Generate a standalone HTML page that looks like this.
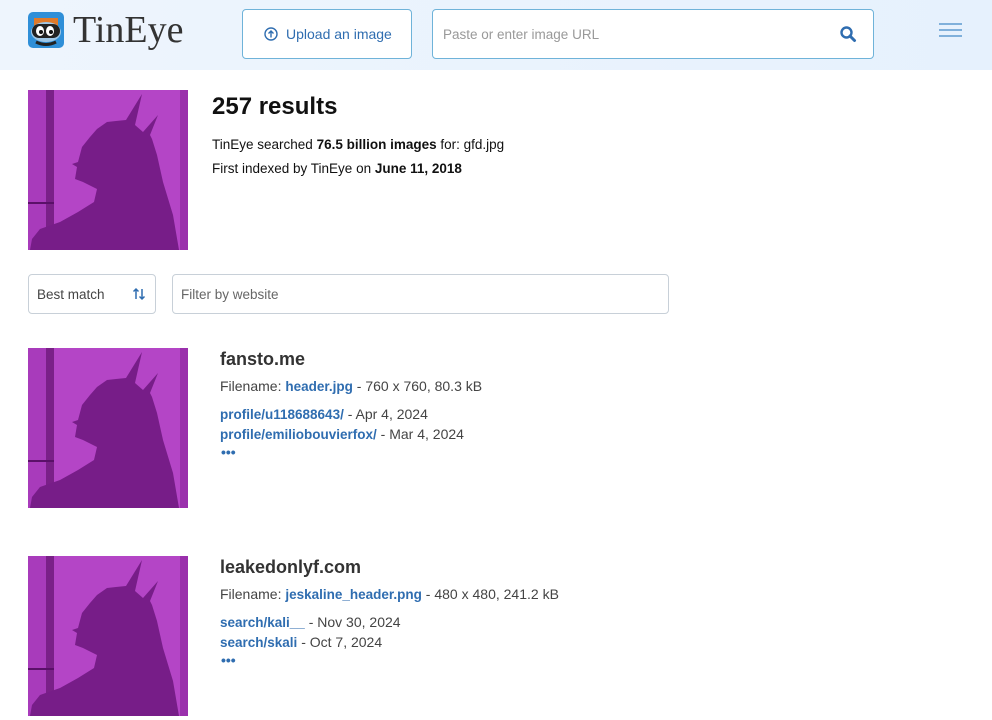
<!DOCTYPE html>
<html><head><meta charset="utf-8"><style>
*{box-sizing:border-box;margin:0;padding:0}
body{width:992px;height:720px;overflow:hidden;background:#fff;font-family:"Liberation Sans",Arial,sans-serif;color:#222;position:relative}
.abs{position:absolute;white-space:nowrap}
.hdr{position:absolute;left:0;top:0;width:992px;height:70px;background:linear-gradient(90deg,#eef5fd,#e6f1fd)}
.box{position:absolute;background:#fff;border:1px solid #6fb3d9;border-radius:4px}
a{color:#2f6db0;text-decoration:none;font-weight:bold;font-size:13.5px}
.b{font-weight:bold}
.t13{font-size:14px}
.g{color:#444}
</style></head><body>
<div class="hdr"></div>
<svg class="abs" style="left:28px;top:12px" width="36" height="36" viewBox="0 0 36 36">
<rect width="36" height="36" rx="5" fill="#2f8fd8"/>
<path d="M6 6h24v8H6z" fill="#e07a2a"/>
<ellipse cx="18" cy="20" rx="15" ry="10" fill="#9fc7e6"/>
<rect x="4" y="12" width="28" height="14" rx="7" fill="#222"/>
<ellipse cx="12" cy="19" rx="4" ry="5" fill="#fff"/><ellipse cx="22" cy="19" rx="4" ry="5" fill="#fff"/>
<circle cx="13" cy="20" r="2" fill="#111"/><circle cx="23" cy="20" r="2" fill="#111"/>
<path d="M8 30q10 5 20 0" stroke="#222" stroke-width="3" fill="none"/>
</svg>
<div class="abs" style="left:73px;top:8px;font-family:'Liberation Serif',serif;font-size:38px;color:#333">TinEye</div>
<div class="box" style="left:242px;top:9px;width:170px;height:50px"></div>
<svg class="abs" style="left:264px;top:27px" width="14" height="14" viewBox="0 0 14 14"><circle cx="7" cy="7" r="6" fill="none" stroke="#2f6db0" stroke-width="1.4"/><path d="M7 10.5V4M4.5 6.5L7 4l2.5 2.5" fill="none" stroke="#2f6db0" stroke-width="1.4"/></svg>
<div class="abs" style="left:286px;top:26px;font-size:14px;color:#2f6db0">Upload an image</div>
<div class="box" style="left:432px;top:9px;width:442px;height:50px"></div>
<div class="abs" style="left:443px;top:27px;font-size:13.5px;color:#999">Paste or enter image URL</div>
<svg class="abs" style="left:839px;top:25px" width="18" height="18" viewBox="0 0 18 18"><circle cx="7.5" cy="7.5" r="5" fill="none" stroke="#2f6db0" stroke-width="2.4"/><path d="M11 11l4.5 4.5" stroke="#2f6db0" stroke-width="3" stroke-linecap="round"/></svg>
<div class="abs" style="left:939px;top:23px;width:23px;height:2px;background:#7fb0db"></div>
<div class="abs" style="left:939px;top:29px;width:23px;height:2px;background:#7fb0db"></div>
<div class="abs" style="left:939px;top:35px;width:23px;height:2px;background:#7fb0db"></div>

<svg width="0" height="0" style="position:absolute"><defs><g id="pic">
<rect width="160" height="160" fill="#b445c6"/>
<rect x="0" y="0" width="26" height="160" fill="#a83bbb"/>
<rect x="18" y="0" width="8" height="160" fill="#7a2088"/>
<rect x="0" y="112" width="26" height="2" fill="#5a1068"/>
<rect x="152" y="0" width="8" height="160" fill="#9a30ac"/>
<path d="M114 4L98 30L88 31L79 32L69 39L62 47L54 57L50 72L44 74L49 77L47 89L55 92L69 99L66 112L50 122L32 132L12 139L4 149L2 160L151 160L145 125L135 92L129 65L124 49L122 45L130 25L115 42L107 35Z" fill="#771d88"/>
</g></defs></svg>

<svg class="abs" style="left:28px;top:90px" width="160" height="160"><use href="#pic"/></svg>
<div class="abs" style="left:212px;top:93px;font-size:24px;font-weight:bold;color:#111">257 results</div>
<div class="abs" style="left:212px;top:137px;color:#111;font-size:13.5px">TinEye searched <span class="b">76.5 billion images</span> for: gfd.jpg</div>
<div class="abs" style="left:212px;top:161px;color:#111;font-size:13.5px">First indexed by TinEye on <span class="b">June 11, 2018</span></div>

<div class="abs" style="left:28px;top:274px;width:128px;height:40px;border:1px solid #c8d0d8;border-radius:4px"></div>
<div class="abs g" style="left:37px;top:287px;font-size:13.5px">Best match</div>
<svg class="abs" style="left:132px;top:287px" width="14" height="14" viewBox="0 0 14 14"><path d="M4 12V2M1.5 4.5L4 2l2.5 2.5M10 2v10M7.5 9.5L10 12l2.5-2.5" fill="none" stroke="#2f6db0" stroke-width="1.5"/></svg>
<div class="abs" style="left:172px;top:274px;width:497px;height:40px;border:1px solid #c8d0d8;border-radius:4px"></div>
<div class="abs" style="left:181px;top:287px;color:#666;font-size:13.5px">Filter by website</div>

<svg class="abs" style="left:28px;top:348px" width="160" height="160"><use href="#pic"/></svg>
<div class="abs" style="left:220px;top:349px;font-size:18px;font-weight:bold;color:#333">fansto.me</div>
<div class="abs t13 g" style="left:220px;top:378px">Filename: <a>header.jpg</a> - 760 x 760, 80.3 kB</div>
<div class="abs t13 g" style="left:220px;top:406px"><a>profile/u118688643/</a> - Apr 4, 2024</div>
<div class="abs t13 g" style="left:220px;top:426px"><a>profile/emiliobouvierfox/</a> - Mar 4, 2024</div>
<div class="abs" style="left:221px;top:444px;font-size:14px;color:#2f6db0;font-weight:bold;letter-spacing:0px">•••</div>

<svg class="abs" style="left:28px;top:556px" width="160" height="160"><use href="#pic"/></svg>
<div class="abs" style="left:220px;top:557px;font-size:18px;font-weight:bold;color:#333">leakedonlyf.com</div>
<div class="abs t13 g" style="left:220px;top:586px">Filename: <a>jeskaline_header.png</a> - 480 x 480, 241.2 kB</div>
<div class="abs t13 g" style="left:220px;top:614px"><a>search/kali__</a> - Nov 30, 2024</div>
<div class="abs t13 g" style="left:220px;top:634px"><a>search/skali</a> - Oct 7, 2024</div>
<div class="abs" style="left:221px;top:652px;font-size:14px;color:#2f6db0;font-weight:bold;letter-spacing:0px">•••</div>
</body></html>
